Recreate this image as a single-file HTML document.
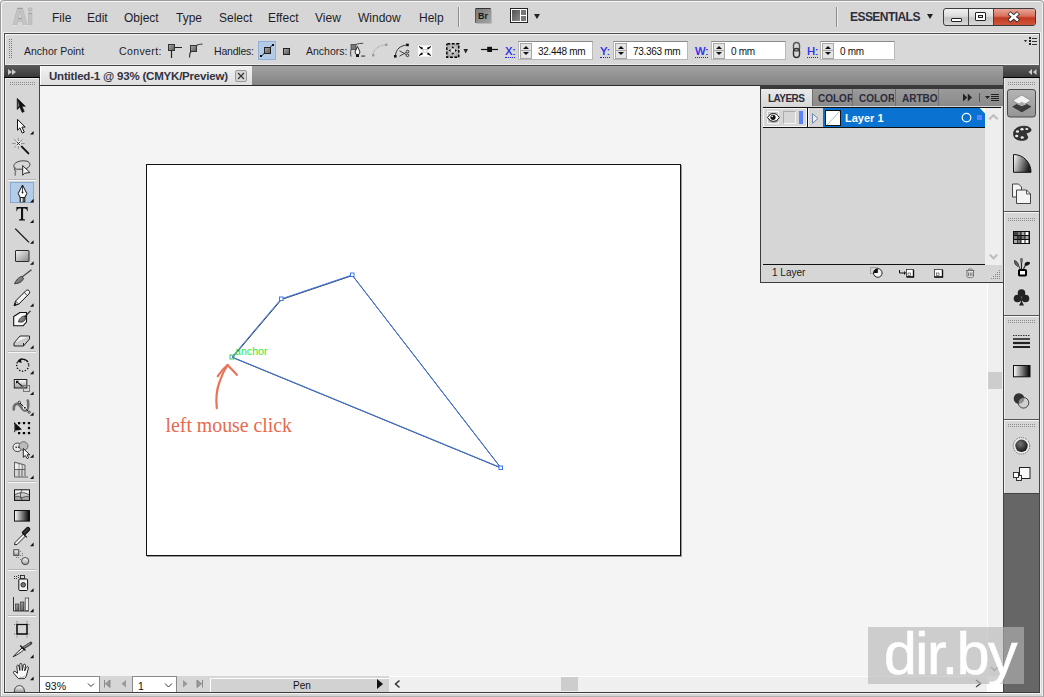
<!DOCTYPE html>
<html><head><meta charset="utf-8">
<style>
*{margin:0;padding:0;box-sizing:border-box}
html,body{width:1044px;height:697px;overflow:hidden;background:#fff;font-family:"Liberation Sans",sans-serif;color:#1a1a1a}
.a{position:absolute}
svg{position:absolute;overflow:visible}
#frame{left:0;top:0;width:1044px;height:697px;background:#d6d6d6;border-radius:4px 4px 0 0;border:1px solid #9c9c9c;border-bottom:1px solid #b0b0b0;box-shadow:inset 1px 1px 0 #f6f6f6,inset -1px 0 0 #f0f0f0}
.menu{top:12px;font-size:12px;color:#1e1e2a;line-height:12px}
.ctl{top:45px;font-size:10.5px;color:#1e1e2a;line-height:12px}
.lbl{top:45px;font-size:11px;color:#3434f0;line-height:12px;text-shadow:0.3px 0 0 #3434f0}
.lbl::after{content:"";position:absolute;left:0;bottom:-1px;width:100%;border-bottom:1px dotted #2020ff}
.fld{top:41px;height:19px;background:#fff;border:1px solid #b8b8b8;border-top-color:#8a8a8a}
.spin{position:absolute;left:1px;top:1px;width:12px;height:16px;background:#e4e4e4;border:1px solid #a8a8a8}
.spin::before{content:"";position:absolute;left:1.5px;top:2px;border-left:3px solid transparent;border-right:3px solid transparent;border-bottom:3px solid #111}
.spin::after{content:"";position:absolute;left:1.5px;top:8px;border-left:3px solid transparent;border-right:3px solid transparent;border-top:3px solid #111}
.spin i{position:absolute;left:0;top:6px;width:10px;height:1px;background:#a8a8a8}
.fld span{position:absolute;left:19px;top:4px;font-size:10px;color:#111;line-height:12px;letter-spacing:-0.3px}
.tooltb{position:absolute;left:29px;width:0;height:0;border-left:3px solid transparent;border-bottom:3px solid #111}
.sep{position:absolute;left:8px;width:28px;height:1px;background:#f4f4f4;border-top:1px solid #b4b4b4}

</style></head><body>
<div class="a" id="frame"></div>

<!-- ================= MENU BAR ================= -->
<div class="a menu" style="left:52px">File</div>
<div class="a menu" style="left:87px">Edit</div>
<div class="a menu" style="left:124px">Object</div>
<div class="a menu" style="left:176px">Type</div>
<div class="a menu" style="left:219px">Select</div>
<div class="a menu" style="left:268px">Effect</div>
<div class="a menu" style="left:315px">View</div>
<div class="a menu" style="left:358px">Window</div>
<div class="a menu" style="left:419px">Help</div>
<div class="a" style="left:458px;top:7px;width:1px;height:20px;background:#8c8c8c;box-shadow:1px 0 0 #efefef"></div>
<!-- Br -->
<div class="a" style="left:475px;top:8px;width:16px;height:15px;background:linear-gradient(135deg,#7a7a7a,#a4a4a4);border-top:1px solid #333;border-left:1px solid #555;border-radius:1px;box-shadow:1px 1px 0 #b8b8b8"></div>
<div class="a" style="left:478px;top:11px;font-size:9px;font-weight:bold;color:#1a1a1a;line-height:10px">Br</div>
<!-- arrange -->
<div class="a" style="left:510px;top:8px;width:18px;height:15px;border:1px solid #222;background:#fff"></div>
<div class="a" style="left:512px;top:10px;width:8px;height:11px;background:linear-gradient(135deg,#555,#8a8a8a)"></div>
<div class="a" style="left:521px;top:10px;width:5px;height:5px;background:#777"></div>
<div class="a" style="left:521px;top:16px;width:5px;height:5px;background:#777"></div>
<div class="a" style="left:534px;top:14px;width:0;height:0;border-left:3.5px solid transparent;border-right:3.5px solid transparent;border-top:5px solid #222"></div>

<div class="a" style="left:836px;top:7px;width:1px;height:20px;background:#8c8c8c;box-shadow:1px 0 0 #efefef"></div>
<div class="a" style="left:850px;top:11px;font-size:12px;font-weight:bold;color:#2c2c3c;line-height:12px;letter-spacing:-0.55px">ESSENTIALS</div>
<div class="a" style="left:927px;top:14px;width:0;height:0;border-left:3.5px solid transparent;border-right:3.5px solid transparent;border-top:5px solid #222"></div>
<!-- window buttons -->
<div class="a" style="left:943px;top:8px;width:93px;height:18px;border:1px solid #3c3c3c;border-radius:3px;overflow:hidden;background:linear-gradient(#f2f2f2 0%,#dcdcdc 45%,#c4c4c4 55%,#d8d8d8 100%)">
  <div class="a" style="left:24px;top:0;width:1px;height:16px;background:#444"></div>
  <div class="a" style="left:49px;top:0;width:42px;height:16px;background:linear-gradient(#e8a598 0%,#d8705c 45%,#c23a22 55%,#d0543c 100%);border-left:1px solid #444"></div>
  <div class="a" style="left:7px;top:9px;width:11px;height:4px;background:#fff;border:1px solid #222;border-radius:1px"></div>
  <div class="a" style="left:31px;top:3px;width:11px;height:9px;background:#fff;border:1px solid #222;border-radius:1px"></div>
  <div class="a" style="left:34px;top:6px;width:5px;height:3px;background:#ddd;border:1px solid #222"></div>
  </div>

<!-- ================= CONTROL BAR ================= -->
<div class="a" style="left:3px;top:32px;width:1038px;height:34px;border:1px solid #f2f2f2;border-bottom:none"></div>
<div class="a" style="left:4px;top:33px;width:1036px;height:33px;background:#d8d8d8;border:1px solid #4a4a4a;border-bottom:none"></div>
<div class="a" style="left:5px;top:34px;width:1034px;height:31px;border:1px solid #f4f4f4;border-bottom:none;border-right:none"></div>
<div class="a ctl" style="left:24px">Anchor Point</div>
<div class="a ctl" style="left:119px;letter-spacing:0.4px">Convert:</div>
<div class="a ctl" style="left:214px;letter-spacing:-0.2px">Handles:</div>
<div class="a ctl" style="left:306px">Anchors:</div>

<div class="a lbl" style="left:505px">X:</div>
<div class="a fld" style="left:518px;width:75px"><div class="spin"><i></i></div><span>32.448 mm</span></div>
<div class="a lbl" style="left:600px">Y:</div>
<div class="a fld" style="left:613px;width:75px"><div class="spin"><i></i></div><span>73.363 mm</span></div>
<div class="a lbl" style="left:695px">W:</div>
<div class="a fld" style="left:711px;width:75px"><div class="spin"><i></i></div><span>0 mm</span></div>
<div class="a lbl" style="left:807px">H:</div>
<div class="a fld" style="left:820px;width:75px"><div class="spin"><i></i></div><span>0 mm</span></div>

<!-- ================= TOOLBAR ================= -->
<div class="a" style="left:4px;top:65px;width:36px;height:628px;background:#d6d6d6;border-left:1px solid #444;border-right:1px solid #444"></div>
<div class="a" style="left:5px;top:78px;width:34px;height:614px;border-left:1px solid #f0f0f0;border-top:1px solid #f0f0f0"></div>
<div class="a" style="left:4px;top:65px;width:36px;height:13px;background:linear-gradient(#5c5c5c,#3a3a3a);border-bottom:1px solid #000"></div>
<div class="a" style="left:8px;top:69px;width:0;height:0;border-top:3px solid transparent;border-bottom:3px solid transparent;border-left:4px solid #ccc"></div>
<div class="a" style="left:12px;top:69px;width:0;height:0;border-top:3px solid transparent;border-bottom:3px solid transparent;border-left:4px solid #ccc"></div>

<!-- ================= TAB BAR ================= -->
<div class="a" style="left:40px;top:65px;width:963px;height:21px;background:linear-gradient(#a2a2a2,#848484);border-top:1px solid #454545;border-bottom:1px solid #2c2c2c"></div>
<div class="a" style="left:40px;top:66px;width:212px;height:19px;background:linear-gradient(#f2f2f2,#dedede);border-left:1px solid #fff"></div>
<div class="a" style="left:49px;top:70px;font-size:11.5px;font-weight:bold;color:#333342;line-height:13px;letter-spacing:-0.2px">Untitled-1 @ 93% (CMYK/Preview)</div>
<div class="a" style="left:235px;top:70px;width:12px;height:12px;border:1px solid #9a9a9a;border-radius:2px;background:#d6d6d6"></div>
<svg style="left:235px;top:70px" width="12" height="12"><path d="M3 3L9 9M9 3L3 9" stroke="#333" stroke-width="1.2"/></svg>

<!-- ================= CANVAS ================= -->
<div class="a" style="left:40px;top:86px;width:963px;height:590px;background:#f4f4f4"></div>
<div class="a" style="left:146px;top:164px;width:535px;height:392px;background:#fff;border:1px solid #111;box-shadow:1px 1px 0 #999"></div>

<!-- vertical scrollbar -->
<div class="a" style="left:987px;top:86px;width:16px;height:590px;background:#efefef;border-left:1px solid #fff"></div>
<div class="a" style="left:988px;top:372px;width:14px;height:17px;background:#cdcdcd"></div>

<!-- ================= STATUS BAR ================= -->
<div class="a" style="left:40px;top:676px;width:963px;height:17px;background:#d6d6d6;border-bottom:1px solid #444"></div>
<div class="a" style="left:40px;top:676px;width:60px;height:16px;background:#fff;border:1px solid #8a8a8a;border-left:none;border-bottom:none"></div>
<div class="a" style="left:45px;top:680px;font-size:10.5px;color:#111;line-height:12px">93%</div>
<div class="a" style="left:132px;top:676px;width:45px;height:16px;background:#fff;border:1px solid #8a8a8a;border-bottom:none"></div>
<div class="a" style="left:138px;top:680px;font-size:10.5px;color:#111;line-height:12px">1</div>
<div class="a" style="left:210px;top:678px;width:179px;height:14px;background:#d2d2d2;border-top:1px solid #fff;border-left:1px solid #fff"></div>
<div class="a" style="left:293px;top:679.5px;font-size:10px;color:#111;line-height:12px">Pen</div>
<div class="a" style="left:377px;top:679px;width:0;height:0;border-top:5px solid transparent;border-bottom:5px solid transparent;border-left:6px solid #111"></div>
<div class="a" style="left:389px;top:676px;width:598px;height:16px;background:#efefef;border-top:1px solid #fff"></div>
<div class="a" style="left:561px;top:677px;width:17px;height:14px;background:#cdcdcd"></div>
<div class="a" style="left:987px;top:676px;width:16px;height:16px;background:#fff"></div>

<!-- ================= RIGHT DOCK ================= -->
<div class="a" style="left:1003px;top:65px;width:37px;height:628px;background:#666;border-left:1px solid #444;border-right:1px solid #444"></div>
<div class="a" style="left:1003px;top:65px;width:37px;height:13px;background:linear-gradient(#5c5c5c,#3a3a3a);border-bottom:1px solid #000"></div>
<div class="a" style="left:1004px;top:78px;width:35px;height:416px;background:#d6d6d6;border-left:1px solid #f0f0f0"></div>

<!-- ================= LAYERS PANEL ================= -->
<div class="a" style="left:760px;top:85px;width:243px;height:198px;background:#d6d6d6;border:1px solid #3c3c3c;border-right:none;border-top:none"></div>
<div class="a" style="left:761px;top:85px;width:242px;height:4px;background:#3a3a3a"></div>
<div class="a" style="left:761px;top:89px;width:242px;height:17px;background:linear-gradient(#9a9a9a,#8a8a8a)"></div>
<div class="a" style="left:761px;top:89px;width:51px;height:17px;background:linear-gradient(#eaeaea,#d8d8d8)"></div>
<div class="a" style="left:812px;top:89px;width:41px;height:17px;border-left:1px solid #707070;border-right:1px solid #707070"></div>
<div class="a" style="left:895px;top:89px;width:44px;height:17px;border-left:1px solid #707070;border-right:1px solid #707070"></div>
<div class="a" style="left:768px;top:93px;font-size:10px;font-weight:bold;color:#2c2c3c;line-height:11px;letter-spacing:-0.55px">LAYERS</div>
<div class="a" style="left:818px;top:93px;width:34px;overflow:hidden;font-size:10px;font-weight:bold;color:#2c2c3c;line-height:11px">COLOR</div>
<div class="a" style="left:859px;top:93px;width:35px;overflow:hidden;font-size:10px;font-weight:bold;color:#2c2c3c;line-height:11px">COLOR</div>
<div class="a" style="left:902px;top:93px;width:36px;overflow:hidden;font-size:10px;font-weight:bold;color:#2c2c3c;line-height:11px">ARTBOARDS</div>

<!-- layers list -->
<div class="a" style="left:763px;top:107px;width:238px;height:1px;background:#111"></div>
<div class="a" style="left:763px;top:127px;width:222px;height:1px;background:#111"></div>
<div class="a" style="left:763px;top:108px;width:44px;height:19px;background:#d6d6d6;border:1px solid #f4f4f4"></div>
<div class="a" style="left:807px;top:108px;width:1px;height:19px;background:#111"></div>
<div class="a" style="left:808px;top:108px;width:15px;height:19px;background:#d6d6d6;border-left:1px solid #f4f4f4"></div>
<div class="a" style="left:823px;top:108px;width:162px;height:19px;background:#0a73d2"></div>
<div class="a" style="left:767px;top:111px;width:12px;height:13px;background:#c8c8c8;border:1px solid #f4f4f4"></div>
<div class="a" style="left:783px;top:111px;width:13px;height:13px;background:#d6d6d6;border:1px solid #f4f4f4;border-top-color:#aaa;border-left-color:#aaa"></div>
<div class="a" style="left:799px;top:111px;width:4px;height:13px;background:#5a82ff"></div>
<div class="a" style="left:825px;top:110px;width:16px;height:16px;background:#fff;border:1px solid #111"></div>
<div class="a" style="left:845px;top:112px;font-size:11px;font-weight:bold;color:#fff;line-height:12px">Layer 1</div>
<div class="a" style="left:977px;top:115px;width:5px;height:5px;background:#5a82ff"></div>
<div class="a" style="left:985px;top:108px;width:17px;height:157px;background:#eeeeee"></div>
<div class="a" style="left:763px;top:264px;width:222px;height:1px;background:#111"></div>
<div class="a" style="left:772px;top:266.5px;font-size:10px;color:#1a1a22;line-height:12px">1 Layer</div>


<!-- ================= OVERLAY SVG ================= -->
<svg style="left:0;top:0" width="1044" height="697" viewBox="0 0 1044 697">
<defs>
<pattern id="dp" width="2" height="2" patternUnits="userSpaceOnUse"><rect width="1" height="1" fill="#8c8c8c"/></pattern>
<pattern id="dpo" width="2" height="2" patternUnits="userSpaceOnUse"><rect x="1" y="1" width="1" height="1" fill="#7a7a7a"/></pattern>
<linearGradient id="gw" x1="0" y1="0" x2="0" y2="1"><stop offset="0" stop-color="#fff"/><stop offset="1" stop-color="#9a9a9a"/></linearGradient>
<linearGradient id="gwd" x1="0" y1="0" x2="1" y2="1"><stop offset="0" stop-color="#f4f4f4"/><stop offset="1" stop-color="#8a8a8a"/></linearGradient>
<linearGradient id="gbw" x1="0" y1="0" x2="1" y2="0"><stop offset="0" stop-color="#fff"/><stop offset="1" stop-color="#000"/></linearGradient>
<linearGradient id="gsq" x1="0" y1="0" x2="1" y2="1"><stop offset="0" stop-color="#aaa"/><stop offset="1" stop-color="#555"/></linearGradient>
<radialGradient id="gball" cx="0.4" cy="0.35" r="0.7"><stop offset="0" stop-color="#777"/><stop offset="1" stop-color="#111"/></radialGradient>
<linearGradient id="gdk" x1="0" y1="0" x2="0" y2="1"><stop offset="0" stop-color="#b4b4b4"/><stop offset="1" stop-color="#959595"/></linearGradient>
<linearGradient id="gq" x1="0" y1="0" x2="1" y2="0.3"><stop offset="0" stop-color="#fff"/><stop offset="1" stop-color="#222"/></linearGradient>
<radialGradient id="grd" cx="0.5" cy="0.5" r="0.6"><stop offset="0" stop-color="#e8e8e8"/><stop offset="1" stop-color="#9a9a9a"/></radialGradient>
</defs>

<!-- Ai logo -->
<path d="M13,25 L17.4,8 L22.6,8 L27,25 L23.4,25 L22.5,21.2 L17.5,21.2 L16.6,25 Z M18.2,18.2 L21.8,18.2 L20,10.8 Z" fill="#c4c4c4" fill-rule="evenodd"/>
<path d="M13,25 L17.4,8 L22.6,8 L27,25 L23.4,25 L22.5,21.2 L17.5,21.2 L16.6,25 Z M18.2,18.2 L21.8,18.2 L20,10.8 Z" fill="none" stroke="#b0b0b0" stroke-width="0.6"/>
<path d="M17.6,8.5H22.4 M18.3,18.7H21.7" stroke="#9c9c9c" stroke-width="1"/>
<path d="M13.2,25.5H16.6 M23.4,25.5H27 M28.6,25.5H32" stroke="#e6e6e6" stroke-width="1"/>
<rect x="28.6" y="13" width="3.4" height="12" fill="#c2c2c2" stroke="#b0b0b0" stroke-width="0.5"/>
<path d="M28.8,13.5H31.8" stroke="#9c9c9c" stroke-width="1"/>
<circle cx="30.3" cy="9.6" r="1.8" fill="#c8c8c8" stroke="#a4a4a4" stroke-width="0.7"/>
<!-- grip dots -->
<rect x="9" y="39" width="4" height="20" fill="url(#dpo)"/>
<rect x="10" y="82" width="26" height="4" fill="url(#dp)"/>
<rect x="1008" y="82" width="28" height="4" fill="url(#dp)"/>
<rect x="1008" y="218" width="28" height="4" fill="url(#dp)"/>
<rect x="1008" y="320" width="28" height="4" fill="url(#dp)"/>
<rect x="1008" y="424" width="28" height="4" fill="url(#dp)"/>


<!-- ===== toolbar icons ===== -->

<!-- separators -->
<g stroke-width="1">
<path d="M8,179.5H36" stroke="#b8b8b8"/><path d="M8,180.5H36" stroke="#f6f6f6"/>
<path d="M8,351.5H36" stroke="#b8b8b8"/><path d="M8,352.5H36" stroke="#f6f6f6"/>
<path d="M8,481.5H36" stroke="#b8b8b8"/><path d="M8,482.5H36" stroke="#f6f6f6"/>
<path d="M8,569.5H36" stroke="#b8b8b8"/><path d="M8,570.5H36" stroke="#f6f6f6"/>
<path d="M8,615.5H36" stroke="#b8b8b8"/><path d="M8,616.5H36" stroke="#f6f6f6"/>
</g>
<!-- selection -->
<path d="M17.2,98.3V109.5L19.8,107.1L22.2,112.4L24.3,111.4L21.9,106.3H25.4Z" fill="#111" stroke="#111" stroke-width="0.6" stroke-linejoin="round"/>
<path d="M17.8,100.5V107.5L19.5,105.8Z" fill="#777"/>
<!-- direct selection -->
<path d="M17.5,119.3V130.2L19.9,127.9L22.3,133.1L24.3,132.1L21.9,127.1H25.2Z" fill="#fff" stroke="#111" stroke-width="1" stroke-linejoin="round"/>
<!-- magic wand -->
<path d="M18.4,137.8V149.2M12.2,143.5H24.6M14.2,139.3L22.6,147.7M22.6,139.3L14.2,147.7" stroke="#8a8a8a" stroke-width="0.9"/>
<circle cx="18.4" cy="143.5" r="2.6" fill="#f0f0f0"/>
<path d="M16.9,142L19.9,145M19.9,142L16.9,145" stroke="#222" stroke-width="1"/>
<path d="M21.8,146.6L28.4,153.4" stroke="#111" stroke-width="1.9" stroke-linecap="round"/>
<!-- lasso -->
<path d="M22.5,169.2 H16.5 C13.5,168.5 13,165 15.5,163 C18,161 23,160.2 27,161.2 C30.5,162.2 30.5,165.5 28.5,167.3 C27.5,168 26.5,168.5 25.5,168.8" fill="none" stroke="#333" stroke-width="0.9"/>
<path d="M15.2,167.5 C14,169 14.5,171 16,171.5 C14.5,172.5 15.5,174 15.2,175.6" fill="none" stroke="#333" stroke-width="0.9"/>
<path d="M22.7,165.6 V175.2 L24.6,173.3 L29.9,172.5 Z" fill="#f4f4f4" stroke="#111" stroke-width="0.9" stroke-linejoin="round"/>
<!-- pen selected -->
<rect x="10.5" y="182.5" width="23" height="20" fill="#b5cce8" stroke="#86aad6"/>
<path d="M22.5,185 L26.8,193.5 L24.8,197.5 H20.2 L18.2,193.5 Z" fill="#fff" stroke="#111" stroke-width="1" stroke-linejoin="round"/>
<path d="M22.5,185V192" stroke="#111" stroke-width="0.8"/><circle cx="22.5" cy="192.5" r="0.9" fill="#111"/>
<rect x="20" y="197.5" width="5" height="4.5" fill="#555" stroke="#111" stroke-width="0.6"/>
<rect x="21" y="198" width="1.5" height="4" fill="#eee"/>
<!-- type T -->
<path d="M16.4,207 H27.7 V211.2 L27.2,211.2 C26.9,209.6 26.3,208.6 24.8,208.6 H23.1 V218.6 C23.1,219.2 23.6,219.5 25,219.5 V220.4 H19.1 V219.5 C20.5,219.5 21,219.2 21,218.6 V208.6 H19.3 C17.8,208.6 17.2,209.6 16.9,211.2 H16.4 Z" fill="#111"/>
<!-- line -->
<path d="M15.2,228.6L29,242.4" stroke="#111" stroke-width="1.3"/>
<!-- rect -->
<rect x="15.5" y="250.5" width="13.5" height="11" rx="0.5" fill="url(#gwd)" stroke="#2a2a2a" stroke-width="1"/>
<!-- paintbrush -->
<path d="M22,277 L31.5,269.7" stroke="#444" stroke-width="1.2"/>
<path d="M14.5,283.8 C16,280 18.5,277.5 21.5,276.3 L23.5,278.3 C22.5,281.5 19.5,283.5 14.5,283.8 Z" fill="url(#gsq)" stroke="#222" stroke-width="0.8"/>
<!-- pencil -->
<path d="M14,305.7 L15.6,301 L25.8,290.8 C26.8,289.8 28.2,289.8 29,290.7 C29.9,291.6 29.9,293 28.9,294 L18.7,304.2 Z" fill="#f2f2f2" stroke="#111" stroke-width="1" stroke-linejoin="round"/>
<path d="M15.6,301L18.7,304.2M24.2,292.4L27.4,295.6" stroke="#111" stroke-width="0.8"/>
<path d="M14,305.7L15.1,302.6L17,304.5Z" fill="#111"/>
<!-- blob brush -->
<path d="M13.7,316.5 L20,312.5 H26.5 V322 L23,325.8 H13.7 Z" fill="#f8f8f8" stroke="#111" stroke-width="1.1" stroke-linejoin="round"/>
<path d="M18.5,322 C19,318.5 22,316 25,316 C26.5,317.5 25.5,320.5 22.5,322 Z" fill="url(#gsq)" stroke="#222" stroke-width="0.8"/>
<path d="M24.5,317L30.5,310.8" stroke="#222" stroke-width="1.1"/>
<!-- eraser -->
<path d="M14,343 L20,336 H29.5 L23.5,343 Z" fill="#f4f4f4" stroke="#111" stroke-width="0.9" stroke-linejoin="round"/>
<path d="M14,343 V346 H23.5 L29.5,339 V336 M23.5,343V346" fill="#ccc" stroke="#111" stroke-width="0.9" stroke-linejoin="round"/>
<!-- rotate -->
<circle cx="22.7" cy="365.2" r="6" fill="none" stroke="#111" stroke-width="1.4" stroke-dasharray="1.3 1.6"/>
<path d="M17,361.5 L21,358.2 L21.6,363 Z" fill="#111"/>
<path d="M19.5,359.8 C22,358.6 26,359.2 28,362" stroke="#111" stroke-width="1.2" fill="none"/>
<!-- scale -->
<rect x="14.3" y="379.5" width="12.5" height="8.5" fill="url(#gw)" stroke="#222" stroke-width="1"/>
<rect x="23.5" y="385.5" width="6" height="6" fill="none" stroke="#777" stroke-width="1"/>
<path d="M16.5,381.3L22.5,386.5" stroke="#111" stroke-width="1.1"/><path d="M16,380.8H19.2L16,383.8Z" fill="#111"/>
<!-- warp -->
<path d="M13.8,409.5 C13.3,404.5 16.5,402.5 19.5,405 C22,407.5 22.5,411.5 26,410.5 C28.5,409.5 28.8,404 27.8,400.5" stroke="#6e6e6e" stroke-width="2.6" fill="none" stroke-linecap="round"/>
<path d="M19.3,402.3 L29.2,412.2" stroke="#111" stroke-width="1"/>
<circle cx="19.3" cy="402.3" r="1.1" fill="#fff" stroke="#111" stroke-width="0.8"/>
<circle cx="29.2" cy="412.2" r="1.1" fill="#fff" stroke="#111" stroke-width="0.8"/>
<circle cx="24.9" cy="407.8" r="1.5" fill="#111" stroke="#fff" stroke-width="1.1"/>
<!-- free transform -->
<rect x="19" y="423" width="10" height="10" fill="#dadada" stroke="#999" stroke-width="0.6" stroke-dasharray="1 1"/>
<g fill="#000"><rect x="18" y="422" width="2.2" height="2.2"/><rect x="22.9" y="422" width="2.2" height="2.2"/><rect x="27.9" y="422" width="2.2" height="2.2"/><rect x="27.9" y="426.9" width="2.2" height="2.2"/><rect x="18" y="432" width="2.2" height="2.2"/><rect x="22.9" y="432" width="2.2" height="2.2"/><rect x="27.9" y="432" width="2.2" height="2.2"/></g>
<path d="M14,422 V432.6 L16.2,430.5 L22,429.5 Z" fill="#111"/>
<path d="M14.6,424 V431 L15.8,430" stroke="#888" stroke-width="0.8" fill="none"/>
<!-- shape builder -->
<ellipse cx="17.5" cy="447.3" rx="4.5" ry="4.3" fill="#e8e8e8" stroke="#333" stroke-width="0.9"/>
<ellipse cx="23.5" cy="446" rx="4.5" ry="4.3" fill="#bbb" stroke="#555" stroke-width="0.8"/>
<circle cx="16.2" cy="447.3" r="0.8" fill="#111"/><circle cx="18.8" cy="447.3" r="0.8" fill="#111"/>
<path d="M23.3,448.5V457.3L25.3,455.5L27.2,458.6L28.6,457.8L27,454.8H29.8Z" fill="#fff" stroke="#111" stroke-width="0.9" stroke-linejoin="round"/>
<!-- perspective grid -->
<path d="M14.5,462V477M14.5,462 L25,465 V476 M14.5,477 H28 M19,463.3V476.5M22,464.2V476.5M14.5,469.5H25" stroke="#555" stroke-width="0.9" fill="none"/>
<path d="M15,464 H18.5V469H15Z M19.5,465H21.5V469H19.5Z" fill="#eee"/>
<!-- mesh -->
<rect x="14.5" y="489.8" width="15" height="10.6" fill="url(#gw)" stroke="#111" stroke-width="1"/>
<path d="M15,495 C19,492 25,492 29,495 M22,490 C20,494 20,497 22,500 M15,497 C18,496 20,497 22,498 C24,497 26,496 29,497" stroke="#333" stroke-width="0.8" fill="none"/>
<!-- gradient -->
<rect x="14.5" y="510.5" width="15" height="10.6" fill="url(#gbw)" stroke="#111" stroke-width="1"/>
<!-- eyedropper -->
<path d="M14.5,544.7 L15,542.5 L23.5,534 L25.5,536 L17,544.5 Z" fill="#f4f4f4" stroke="#111" stroke-width="0.9" stroke-linejoin="round"/>
<path d="M22.3,532.8 L26.8,537.3 M24.5,535 L29,530.5 C30,529.5 29.8,528.5 29,528 C28.5,527.3 27.5,527.2 26.5,528.2 L22,532.7" fill="#333" stroke="#111" stroke-width="1.2"/>
<!-- blend -->
<rect x="13.8" y="549.8" width="5" height="5.5" fill="url(#gw)" stroke="#333" stroke-width="0.9"/>
<circle cx="25.2" cy="561.1" r="3.6" fill="url(#gw)" stroke="#333" stroke-width="0.9"/>
<g fill="#777"><rect x="20" y="551" width="1" height="1"/><rect x="22" y="553" width="1" height="1"/><rect x="20" y="555" width="1" height="1"/><rect x="18" y="557" width="1" height="1"/><rect x="16" y="557" width="1" height="1"/><rect x="20" y="559" width="1" height="1"/><rect x="22" y="555" width="1" height="1"/></g>
<!-- symbol sprayer -->
<rect x="18.8" y="579" width="8.8" height="11.5" rx="1" fill="#f2f2f2" stroke="#111" stroke-width="1"/>
<rect x="20.5" y="575.5" width="4" height="3" fill="#ddd" stroke="#111" stroke-width="0.8"/>
<circle cx="23.2" cy="584.8" r="2.3" fill="#777" stroke="#111" stroke-width="0.8"/>
<g fill="#333"><rect x="14" y="576" width="1" height="1"/><rect x="16" y="576" width="1" height="1"/><rect x="18" y="575" width="1" height="1"/><rect x="14" y="578" width="1" height="1"/><rect x="16" y="578" width="1" height="1"/><rect x="18" y="577" width="1" height="1"/></g>
<!-- column graph -->
<path d="M13.5,597V611H29" stroke="#333" stroke-width="1" fill="none"/>
<rect x="15.5" y="604" width="3.5" height="6.5" fill="url(#gsq)" stroke="#222" stroke-width="0.6"/>
<rect x="20.5" y="602" width="3.5" height="8.5" fill="url(#gsq)" stroke="#222" stroke-width="0.6"/>
<rect x="25.2" y="598" width="3.5" height="12.5" fill="#eee" stroke="#222" stroke-width="0.6"/>
<!-- artboard -->
<rect x="17" y="624.5" width="10" height="9.5" fill="none" stroke="#111" stroke-width="1.1"/>
<path d="M14,624.5H30M14,634H30M17,621V637.5M27,621V637.5" stroke="#666" stroke-width="0.9" stroke-dasharray="1.2 1"/>
<rect x="17" y="624.5" width="10" height="9.5" fill="none" stroke="#111" stroke-width="1.1"/>
<!-- slice -->
<path d="M22.8,648.2 L30.8,643.2" stroke="#444" stroke-width="3" stroke-linecap="round"/>
<path d="M23.5,647.6 L30,643.6" stroke="#999" stroke-width="1"/>
<path d="M13.2,656.7 C16,653.5 19,650.5 22.3,647.9 L23.8,649.9 C20.5,652.5 17.2,655 13.2,656.7 Z" fill="#f6f6f6" stroke="#111" stroke-width="0.9" stroke-linejoin="round"/>
<path d="M20.1,645.4 L25.5,650.4" stroke="#111" stroke-width="1.3"/>
<!-- hand -->
<path d="M18.5,678.6 L14,673.6 C13,672.4 13.6,670.8 15.1,671.3 L17.6,673.4 L16.8,666.6 C16.6,665 18.6,664.6 18.9,666.1 L19.9,670.5 L19.8,664.6 C19.8,663 21.9,663 21.9,664.6 L22.3,670.5 L23.4,665.1 C23.7,663.7 25.7,663.9 25.5,665.4 L24.7,670.8 L26.3,667.4 C26.8,666.1 28.8,666.6 28.4,668.1 L26.6,675 C26.1,676.9 25.2,678 24.6,678.6 Z" fill="#fafafa" stroke="#111" stroke-width="0.9" stroke-linejoin="round"/>
<path d="M19.5,677 C21.5,678 23.5,677.5 25,676" stroke="#bbb" stroke-width="1.2" fill="none"/>
<g id="tri" fill="#111">
<path d="M30,134.6H33.6V131Z"/><path d="M30,202.4H33.6V198.8Z"/><path d="M30,223H33.6V219.4Z"/><path d="M30,243.8H33.6V240.2Z"/><path d="M30,264.8H33.6V261.2Z"/>
<path d="M30,306.8H33.6V303.2Z"/><path d="M30,348.8H33.6V345.2Z"/><path d="M30,374.2H33.6V370.6Z"/><path d="M30,395H33.6V391.4Z"/><path d="M30,415.8H33.6V412.2Z"/>
<path d="M30,457.8H33.6V454.2Z"/><path d="M30,479H33.6V475.4Z"/><path d="M30,546.2H33.6V542.6Z"/><path d="M30,591.8H33.6V588.2Z"/><path d="M30,612.2H33.6V608.6Z"/>
<path d="M30,658.2H33.6V654.6Z"/><path d="M30,680.2H33.6V676.6Z"/>
</g>
<!-- zoom partial -->
<path d="M14.3,692 C14.3,688 16.5,685.7 19.4,685.7 C22.3,685.7 24.5,688 24.5,692" fill="url(#gw)" stroke="#333" stroke-width="1"/>


<!-- ===== layers panel icons ===== -->
<path d="M963,93.5V101.5L967.2,97.5Z M967.8,93.5V101.5L972,97.5Z" fill="#222"/>
<path d="M979.5,93V102" stroke="#555" stroke-width="1"/>
<path d="M985,96H990L987.5,99Z" fill="#222"/>
<path d="M991,94.5H999M991,96.5H999M991,98.5H999M991,100.5H999" stroke="#222" stroke-width="1"/>
<!-- eye -->
<path d="M767.5,117.5 C769.5,114.3 771.5,113.5 773.5,113.5 C775.5,113.5 777.5,114.5 779.3,117.5 C777.5,120.5 775.5,121.3 773.5,121.3 C771.5,121.3 769.5,120.5 767.5,117.5 Z" fill="#fff" stroke="#111" stroke-width="1"/>
<circle cx="773" cy="117.3" r="2.6" fill="#111"/><circle cx="772.2" cy="116.4" r="0.8" fill="#fff"/>
<path d="M768.5,119.5 C770.5,122.5 776,123 779,119.8" stroke="#555" stroke-width="0.6" fill="none"/>
<!-- triangle -->
<path d="M812.5,113.7 L818,118.5 L812.5,123.3 Z" fill="#f0f0f0" stroke="#6a88b0" stroke-width="1"/>
<!-- thumbnail diagonal -->
<path d="M827,125L840,111" stroke="#aaa" stroke-width="0.8"/>
<!-- folded corner -->
<path d="M979.8,108H985V113.5Z" fill="#fff"/>
<!-- target circle -->
<circle cx="966.5" cy="117.6" r="4.3" fill="none" stroke="#fff" stroke-width="1.2"/>
<!-- scroll arrows -->
<path d="M989.3,119.3L993.5,115.2L997.7,119.3" stroke="#bdbdbd" stroke-width="2" fill="none"/>
<path d="M989.8,254.5L993.5,258.5L997.2,254.5" stroke="#bdbdbd" stroke-width="2" fill="none"/>
<!-- footer icons -->
<rect x="870.5" y="267.5" width="7" height="6" fill="none" stroke="#555" stroke-width="0.8" stroke-dasharray="1 1"/>
<circle cx="877.8" cy="273" r="4.3" fill="#f4f4f4" stroke="#222" stroke-width="1"/>
<path d="M877.8,273V268.7A4.3,4.3 0 0 0 873.5,273Z" fill="#111"/>
<path d="M899.5,270V273H905" stroke="#111" stroke-width="1" fill="none"/><path d="M904,271L906,273L904,275Z" fill="#111"/>
<rect x="906.5" y="269.5" width="7" height="7" fill="#fff" stroke="#333" stroke-width="0.8"/>
<path d="M913.5,270V277H906.5" stroke="#111" stroke-width="1.4" fill="none"/>
<rect x="908" y="273" width="2.5" height="2.5" fill="none" stroke="#333" stroke-width="0.6"/>
<rect x="934.5" y="269.5" width="8" height="7.5" fill="#fff" stroke="#333" stroke-width="0.8"/>
<path d="M942.5,270V277H934.5" stroke="#111" stroke-width="1.4" fill="none"/>
<rect x="936.5" y="273" width="2.5" height="2.5" fill="none" stroke="#333" stroke-width="0.6"/>
<path d="M966,270.5H974.5M967,271V276.5C967,277.3 968,277.6 970.3,277.6C972.5,277.6 973.5,277.3 973.5,276.5V271 M968.5,272.5V276M970.3,272.5V276M972,272.5V276M968.5,270.3V269H972V270.3" stroke="#777" stroke-width="1" fill="#e0e0e0"/>
<g fill="#888"><rect x="999" y="270" width="1" height="1"/><rect x="997" y="272" width="1" height="1"/><rect x="999" y="272" width="1" height="1"/><rect x="995" y="274" width="1" height="1"/><rect x="997" y="274" width="1" height="1"/><rect x="999" y="274" width="1" height="1"/><rect x="993" y="276" width="1" height="1"/><rect x="995" y="276" width="1" height="1"/><rect x="997" y="276" width="1" height="1"/><rect x="999" y="276" width="1" height="1"/><rect x="991" y="278" width="1" height="1"/><rect x="993" y="278" width="1" height="1"/><rect x="995" y="278" width="1" height="1"/><rect x="997" y="278" width="1" height="1"/><rect x="999" y="278" width="1" height="1"/></g>

<!-- ===== dock icons ===== -->
<path d="M1008,78.5 H1008" stroke="none"/>
<path d="M1006,69V75L1002.5,72Z M1010.5,69V75L1007,72Z" fill="#ccc" transform="translate(26,0)"/>
<rect x="1007.5" y="89.5" width="28" height="27.5" rx="2.5" fill="url(#gdk)" stroke="#4a4a4a" stroke-width="1"/>
<path d="M1021.8,101.5 L1030.8,106.7 L1021.8,111.9 L1012.8,106.7 Z" fill="#3c3c3c" stroke="#222" stroke-width="0.6"/>
<path d="M1021.8,95 L1030.8,100.5 L1021.8,106 L1012.8,100.5 Z" fill="#f2f2f2" stroke="#777" stroke-width="0.6"/>
<path d="M1021.8,101.8 L1026.5,104.4 L1021.8,106 L1017,104.4 Z" fill="#aaa"/>
<!-- palette -->
<path d="M1013.5,134.5 C1013,130 1017,126.5 1023,126.2 C1029,126 1031.5,128.5 1031,130.5 C1030.5,132.5 1027.5,132 1026.5,133.5 C1026,135 1028.5,136 1027.5,138.3 C1026.5,140.5 1022,140.8 1018.5,140 C1015.5,139.3 1013.8,137.5 1013.5,134.5 Z" fill="#333" stroke="#111" stroke-width="0.6"/>
<g fill="#eee"><ellipse cx="1017.5" cy="131.5" rx="1.6" ry="1.3"/><ellipse cx="1022" cy="129.3" rx="1.6" ry="1.2"/><ellipse cx="1026.8" cy="129" rx="1.5" ry="1.1"/><ellipse cx="1016.7" cy="136" rx="1.6" ry="1.3"/><ellipse cx="1022.2" cy="137.5" rx="1.6" ry="1.2"/></g>
<!-- gradient quarter -->
<path d="M1013.5,172.3 V154.5 C1023.5,154.5 1031,162.5 1031,172.3 Z" fill="url(#gq)" stroke="#111" stroke-width="1"/>
<!-- pages -->
<path d="M1012.5,184 H1018.5 L1021.5,187 V197 H1012.5 Z" fill="#f4f4f4" stroke="#333" stroke-width="0.9"/>
<path d="M1016.5,190 H1026.5 L1030.5,194 V203.5 H1016.5 Z" fill="#f4f4f4" stroke="#333" stroke-width="0.9"/>
<path d="M1026.5,190V194H1030.5" stroke="#333" stroke-width="0.8" fill="none"/>
<!-- dock separators -->
<path d="M1004,211.5H1039" stroke="#555" stroke-width="1"/><path d="M1004,212.5H1039" stroke="#f4f4f4" stroke-width="1"/>
<path d="M1004,315.5H1039" stroke="#555" stroke-width="1"/><path d="M1004,316.5H1039" stroke="#f4f4f4" stroke-width="1"/>
<path d="M1004,419.5H1039" stroke="#555" stroke-width="1"/><path d="M1004,420.5H1039" stroke="#f4f4f4" stroke-width="1"/>
<path d="M1004,493.5H1039" stroke="#444" stroke-width="1"/>
<!-- swatches -->
<rect x="1013" y="231" width="17" height="13" fill="#111"/>
<g fill="#777"><rect x="1017.5" y="232" width="3" height="3"/><rect x="1014" y="236" width="3" height="3"/><rect x="1021.5" y="236" width="3" height="3"/><rect x="1017.5" y="240" width="3" height="3"/></g>
<g fill="#aaa"><rect x="1021.5" y="232" width="3" height="3"/><rect x="1025.5" y="236" width="3" height="3"/><rect x="1014" y="240" width="3" height="3"/></g>
<g fill="#fff"><rect x="1025.5" y="232" width="3" height="3"/><rect x="1021.5" y="240" width="3" height="3"/><rect x="1025.5" y="240" width="3" height="3"/></g>
<g fill="#444"><rect x="1014" y="232" width="3" height="3"/><rect x="1017.5" y="236" width="3" height="3"/></g>
<!-- brushes -->
<rect x="1019" y="270" width="7" height="5.5" rx="0.8" fill="#fff" stroke="#000" stroke-width="2"/>
<path d="M1014.5,260.5 C1016.5,261 1018.5,263.5 1018.7,265.5 L1020,269 M1014.5,260.5 C1014.2,263 1015.5,265.5 1018,266.5" fill="#555" stroke="#444" stroke-width="1"/>
<path d="M1021.5,262V269" stroke="#222" stroke-width="1.2"/>
<rect x="1020.2" y="258" width="2.6" height="4.5" rx="0.8" fill="#666"/>
<path d="M1023.5,269 L1025.5,265" stroke="#222" stroke-width="1.1"/>
<path d="M1024.5,264.5 C1025,262 1027.5,261 1029.8,262.2 C1030.5,264 1028.5,265.5 1025.5,265.8 Z" fill="#111"/>
<!-- club -->
<circle cx="1021.5" cy="293" r="3.8" fill="#222"/><circle cx="1017.5" cy="298.5" r="3.8" fill="#222"/><circle cx="1025.5" cy="298.5" r="3.8" fill="#222"/>
<path d="M1021.5,295 L1022.2,302 L1024,305.5 H1019 L1020.8,302 Z" fill="#222"/>
<!-- stroke -->
<path d="M1013,335.5H1030" stroke="#333" stroke-width="1" stroke-dasharray="1.5 1"/>
<path d="M1013,339H1030" stroke="#222" stroke-width="1.6"/>
<path d="M1013,343H1030" stroke="#222" stroke-width="2.2"/>
<path d="M1013,347H1030" stroke="#222" stroke-width="2"/>
<!-- gradient panel -->
<rect x="1013.5" y="365.5" width="16.5" height="11.3" fill="url(#gbw)" stroke="#111" stroke-width="1"/>
<!-- transparency -->
<circle cx="1019" cy="398.5" r="5.3" fill="#333"/>
<circle cx="1023.5" cy="402.8" r="5.3" fill="#ccc" fill-opacity="0.6" stroke="#333" stroke-width="0.9"/>
<!-- appearance -->
<circle cx="1021.5" cy="445.8" r="8.2" fill="#eee" stroke="#333" stroke-width="0.8" stroke-dasharray="1 1"/>
<circle cx="1021.5" cy="445.8" r="6.2" fill="url(#gball)"/>
<!-- graphic styles -->
<rect x="1019.5" y="467.5" width="10.5" height="11" fill="#f8f8f8" stroke="#222" stroke-width="1"/>
<rect x="1016.5" y="475.5" width="5" height="5" fill="#eee" stroke="#222" stroke-width="0.9"/>
<rect x="1013.5" y="472.5" width="5" height="5" fill="#fff" stroke="#222" stroke-width="0.9"/>


<!-- ===== canvas drawing ===== -->
<path d="M232,357 L281,299 L352,275 L500.5,467.5 Z" fill="none" stroke="#222" stroke-width="0.9" transform="translate(0.5,0.5)"/>
<path d="M232,357 L281,299 L352,275 L500.5,467.5 Z" fill="none" stroke="#3d78f0" stroke-width="1"/>
<g fill="#fff" stroke="#3d78f0" stroke-width="1">
<rect x="279.5" y="297" width="3.5" height="3.5"/><rect x="350.5" y="273" width="3.5" height="3.5"/><rect x="499" y="466" width="3.5" height="3.5"/>
</g>
<rect x="230" y="355" width="4" height="4" fill="none" stroke="#3fbf6a"/>
<text x="235" y="355.2" font-family="Liberation Sans" font-size="10" fill="#33e833" textLength="32.5" lengthAdjust="spacingAndGlyphs">anchor</text>
<path d="M216.8,408.2 C215.8,399 216.5,390 219.5,382 C221.5,376 224.5,369.5 227.5,365" fill="none" stroke="#e8735a" stroke-width="2.2" stroke-linecap="round"/>
<path d="M217.8,376.2 C220.5,372 224.5,367.5 227.5,365 C230.5,368 234,371.5 236.8,374.8" fill="none" stroke="#e8735a" stroke-width="2.2" stroke-linecap="round" stroke-linejoin="round"/>
<text x="165.5" y="431.6" font-family="Liberation Serif" font-size="20" fill="#e8694e" textLength="126.5" lengthAdjust="spacingAndGlyphs">left mouse click</text>


<!-- ===== status bar icons ===== -->
<path d="M94,683.5L97,686.5L100,683.5" stroke="#333" stroke-width="1" fill="none" transform="translate(-6,0)"/>
<path d="M165,683.5L168.5,687L172,683.5" stroke="#333" stroke-width="1" fill="none"/>
<path d="M104.5,680V687.5M110,680V687.5L105.5,683.75Z" stroke="#888" stroke-width="1" fill="#999"/>
<path d="M126,680V687.5L121.5,683.75Z" fill="#999"/>
<path d="M183,680V687.5L187.5,683.75Z" fill="#999"/>
<path d="M197,680V687.5L201.5,683.75Z M202.5,680V687.5" stroke="#888" stroke-width="1" fill="#999"/>
<path d="M399.5,680.5L395.5,684L399.5,687.5" stroke="#333" stroke-width="1.5" fill="none"/>


<!-- close X -->
<path d="M1009,12.8 L1018.5,21 M1018.5,12.8 L1009,21" stroke="#2a2a2a" stroke-width="4.4" stroke-linecap="butt"/>
<path d="M1009.5,13.3 L1018,20.5 M1018,13.3 L1009.5,20.5" stroke="#fff" stroke-width="2.6" stroke-linecap="butt"/>
<path d="M5,64.5H1039" stroke="#ececec" stroke-width="1"/>
<!-- side highlight lines -->
<path d="M3.5,32V694M1040.5,32V694" stroke="#f2f2f2" stroke-width="1"/>
<!-- bottom frame line -->
<path d="M4,692.5H1040" stroke="#3c3c3c" stroke-width="1"/>
<path d="M3,693.5H1041" stroke="#f2f2f2" stroke-width="1"/>
<!-- scroll chevrons -->
<path d="M976,680L980.5,683.5L976,687" stroke="#555" stroke-width="1.5" fill="none"/>
<path d="M991,667L994.5,670.5L998,667" stroke="#999" stroke-width="1.3" fill="none"/>

<!-- ===== control bar icons ===== -->
<!-- convert corner -->
<rect x="168.5" y="44.5" width="6" height="6" fill="url(#gsq)" stroke="#333"/>
<path d="M175,47.5H182 M171.5,51V58" stroke="#222" stroke-width="1.2" fill="none"/>
<!-- convert smooth -->
<rect x="190.5" y="45.5" width="6" height="6" fill="url(#gsq)" stroke="#333"/>
<path d="M189.5,57.5 C189.5,54 190,52.5 191,51.5 M196.5,45.5 C198,44.3 200,44 202.5,44" stroke="#333" stroke-width="1.1" fill="none"/>
<!-- handles selected -->
<rect x="258.5" y="41.5" width="17" height="18" fill="#b3cbe6" stroke="#8fb0d8"/>
<path d="M261,56.5 L273,44.5" stroke="#222" stroke-width="1"/>
<rect x="260" y="55" width="2" height="2" fill="#111"/><rect x="272" y="44" width="2" height="2" fill="#111"/>
<rect x="264.5" y="47.5" width="6" height="6" fill="url(#gsq)" stroke="#222"/>
<path d="M281,58 L293,46" stroke="#cfcfcf" stroke-width="1"/>
<rect x="283.5" y="48.5" width="6" height="6" fill="url(#gsq)" stroke="#222"/>
<!-- anchors: delete anchor -->
<rect x="351" y="44.5" width="5" height="5" fill="#777" stroke="#444" stroke-width="0.8"/>
<path d="M351,49.5 C350.5,52 350.5,54 351,56.5 M356,44.5 C358,43.6 360.5,43.4 363.2,43.3" stroke="#444" stroke-width="1" fill="none"/>
<path d="M357.5,46.5 L360,52 L358.8,54.5 L356.2,54.5 L355,52 Z" fill="#fff" stroke="#111" stroke-width="0.9"/>
<rect x="356" y="54.5" width="3" height="2.5" fill="#111"/>
<rect x="361.3" y="55.4" width="3.8" height="1.4" fill="#555"/>
<!-- dotted arc -->
<path d="M373,54.5 C374,49 378,45.5 385.5,45" stroke="#999" stroke-width="1" stroke-dasharray="1 1" fill="none"/>
<rect x="372" y="54" width="2.4" height="2.4" fill="#999"/><rect x="385" y="43.6" width="2.4" height="2.4" fill="#999"/>
<!-- arc + scissors -->
<path d="M395.5,55.5 C396,49 400.5,45.5 407,45" stroke="#333" stroke-width="1" fill="none"/>
<rect x="394" y="55" width="2.6" height="2.6" fill="#111"/><rect x="406.2" y="43.6" width="2.6" height="2.6" fill="#111"/>
<path d="M399.5,50.8 L406,54.5 M399.5,56.2 L406,52.5" stroke="#333" stroke-width="0.9"/>
<circle cx="407.5" cy="51.6" r="1.3" fill="none" stroke="#222" stroke-width="0.9"/>
<circle cx="407.5" cy="55.3" r="1.3" fill="none" stroke="#222" stroke-width="0.9"/>
<!-- box arrows -->
<rect x="417.5" y="45" width="15" height="12" fill="#fff" stroke="#d0d0d0" stroke-width="0.6"/>
<rect x="423" y="49.5" width="4" height="2.6" fill="none" stroke="#bbb" stroke-width="0.8"/>
<path d="M419.3,46.3 L422,49 M430.7,46.3 L428,49 M419.3,55.7 L422,53 M430.7,55.7 L428,53" stroke="#000" stroke-width="1.1"/>
<path d="M422.6,49.6V47.2H420.2 Z M427.4,49.6V47.2H429.8 Z M422.6,52.4V54.8H420.2 Z M427.4,52.4V54.8H429.8 Z" fill="#000" stroke="none"/>
<!-- dashed square -->
<rect x="446.8" y="43.8" width="12" height="13.4" fill="url(#grd)" stroke="#000" stroke-width="1.4" stroke-dasharray="2.8 1.6" stroke-dashoffset="-0.6"/>
<path d="M452.8,46 L451.2,48.2 H454.4 Z M452.8,55 L451.2,52.8 H454.4 Z M448.6,50.5 L450.6,48.9 V52.1 Z M457,50.5 L455,48.9 V52.1 Z" fill="#111"/>
<path d="M463.4,49 H468 L465.7,53.5 Z" fill="#222"/>
<!-- line with square -->
<path d="M481,49.5 H498" stroke="#111" stroke-width="1.2"/>
<rect x="487.2" y="46.8" width="4.8" height="5.2" fill="#111"/>
<!-- link icon -->
<rect x="793.5" y="42.5" width="6" height="8.5" rx="3" fill="none" stroke="#555" stroke-width="1.4"/>
<rect x="793.5" y="48.5" width="6" height="9" rx="3" fill="none" stroke="#333" stroke-width="1.4"/>
<!-- panel menu icon at far right of control bar -->
<path d="M1023.8,40 H1027.2 L1025.5,42.2 Z" fill="#333"/>
<rect x="1029" y="37" width="2" height="2" fill="#222"/><rect x="1029" y="40" width="2" height="2" fill="#222"/><rect x="1029" y="43" width="2" height="2" fill="#222"/>
<path d="M1032,38.5H1037M1032,41.5H1037M1032,44.5H1037" stroke="#333" stroke-width="1"/>
</svg>

<!-- watermark -->
<div class="a" style="left:868px;top:627px;width:156px;height:57px;background:rgba(180,180,180,0.62)"></div>
<div class="a" style="left:884px;top:618.5px;font-size:59px;color:#fff;line-height:70px;letter-spacing:-1.5px;-webkit-text-stroke:0.6px #fff">dir.by</div>
</body></html>
